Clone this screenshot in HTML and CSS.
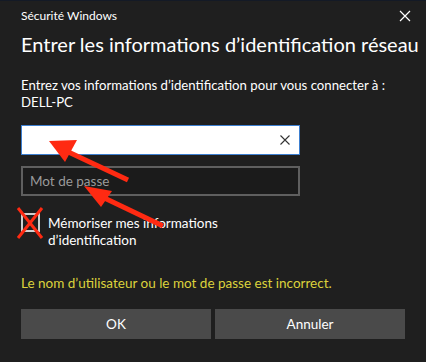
FILE: index.html
```html
<!DOCTYPE html>
<html lang="fr">
<head>
<meta charset="utf-8">
<title>Sécurité Windows</title>
<link rel="stylesheet" href="styles.css">
</head>
<body>
<div class="dialog">
  <div class="titlebar">
    <span class="app">Sécurité Windows</span>
    <svg class="close" width="12" height="12" viewBox="0 0 12 12"><path d="M1 1L11 11M11 1L1 11" stroke="#fff" stroke-width="1.2"/></svg>
  </div>
  <h1 class="heading">Entrer les informations d’identification réseau</h1>
  <p class="intro">Entrez vos informations d’identification pour vous connecter à :<br>DELL-PC</p>
  <div class="field field-user">
    <span class="value"></span>
    <svg class="clear" width="10" height="10" viewBox="0 0 10 10"><path d="M0.5 0.5L9.5 9.5M9.5 0.5L0.5 9.5" stroke="#333" stroke-width="1.1"/></svg>
  </div>
  <div class="field field-pass">
    <span class="placeholder">Mot de passe</span>
  </div>
  <div class="remember">
    <span class="box"></span>
    <span class="label">Mémoriser mes informations<br>d’identification</span>
  </div>
  <p class="error">Le nom d’utilisateur ou le mot de passe est incorrect.</p>
  <div class="buttons">
    <button class="btn">OK</button>
    <button class="btn">Annuler</button>
  </div>
</div>
<svg class="annot" width="426" height="362" viewBox="0 0 426 362">
  <g stroke="#ff2a12" stroke-width="5" stroke-linecap="butt" fill="#ff2a12">
    <line x1="128" y1="180" x2="62" y2="149"/>
    <polygon points="49,141 77,140 65,162" stroke="none"/>
    <line x1="163" y1="226" x2="96" y2="194"/>
    <polygon points="84,186 112,191 101,207" stroke="none"/>
    <line x1="18" y1="208" x2="42" y2="238" stroke-width="3"/>
    <line x1="42" y1="208" x2="18" y2="238" stroke-width="3"/>
  </g>
</svg>
</body>
</html>
```
FILE: styles.css
```css
html, body {
  margin: 0;
  padding: 0;
  background: #1f1f1f;
}
body {
  width: 426px;
  height: 362px;
  overflow: hidden;
  position: relative;
  font-family: Lato, "Noto Sans", sans-serif;
  color: #fff;
}
.dialog {
  box-sizing: border-box;
  width: 426px;
  height: 362px;
  padding: 0 21px;
  display: flex;
  flex-direction: column;
  border-top: 1px solid #141a26;
}
.titlebar {
  height: 29px;
  display: flex;
  align-items: center;
  justify-content: space-between;
}
.app {
  font-size: 12px;
}
.close {
  margin-right: -6px;
}
.heading {
  margin: 0;
  font-weight: normal;
  font-size: 20px;
  line-height: 28px;
  height: 28px;
  white-space: nowrap;
}
.intro {
  margin: 19px 0 0;
  font-size: 13.2px;
  line-height: 17px;
  white-space: nowrap;
}
.field {
  box-sizing: border-box;
  width: 279px;
  height: 30px;
  display: flex;
  align-items: center;
  padding: 0 9px;
}
.field-user {
  margin-top: 14px;
  background: #fff;
  border: 1px solid #3d7fd0;
  justify-content: flex-end;
}
.field-pass {
  margin-top: 11px;
  background: #1b1b1b;
  border: 2px solid #5f5f5f;
  padding: 0 7px;
}
.placeholder {
  color: #9a9a9a;
  font-size: 13.5px;
}
.remember {
  margin-top: 17px;
  display: flex;
  gap: 8px;
  align-items: flex-start;
}
.box {
  box-sizing: border-box;
  width: 19px;
  height: 19px;
  border: 2px solid #cfcfcf;
  flex: none;
}
.label {
  font-size: 13.5px;
  line-height: 17px;
  margin-top: 2px;
}
.error {
  margin: 26px 0 0;
  color: #dcd23c;
  font-size: 13.5px;
  line-height: 17px;
  white-space: nowrap;
}
.buttons {
  margin-top: 17px;
  display: flex;
  gap: 4px;
}
.btn {
  flex: 1;
  height: 30px;
  border: none;
  background: #4a4a4a;
  color: #fff;
  font-family: inherit;
  font-size: 13.5px;
  padding: 0;
}
.annot {
  position: absolute;
  left: 0;
  top: 0;
  pointer-events: none;
}
```
